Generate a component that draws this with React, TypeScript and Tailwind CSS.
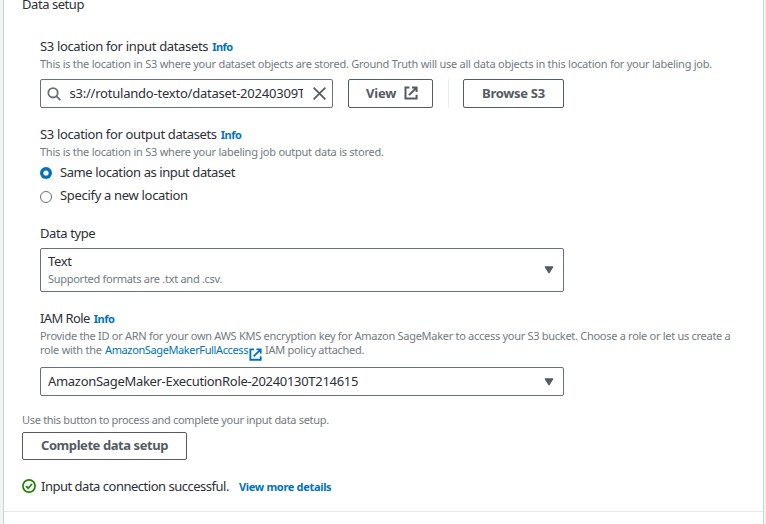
import React from "react";

function ExternalIcon({ className }: { className: string }) {
  return (
    <svg viewBox="0 0 14 14" className={className} fill="none" stroke="currentColor" strokeWidth="2">
      <path d="M5.4 1.5H1.5V12.6H12.6V8.8" />
      <path d="M8 1.5H12.6V6M12.4 1.7L5 9.1" />
    </svg>
  );
}

function Label({ text, info, className }: { text: string; info?: boolean; className: string }) {
  return (
    <div className="flex h-5 items-center whitespace-nowrap pb-0.5 text-[13px] leading-5">
      <span className={className}>{text}</span>
      {info && <a className="ml-1 pt-px text-[11px] font-bold leading-5 tracking-[-0.5px] text-[#0073bb]">Info</a>}
    </div>
  );
}

function Caret() {
  return (
    <svg viewBox="0 0 10 8" className="h-2 w-2.5 shrink-0" fill="#545b64" stroke="#545b64" strokeLinejoin="round">
      <path d="M1 .8H9L5 7.2Z" />
    </svg>
  );
}

export default function App() {
  return (
    <div className="h-[524px] w-[766px] overflow-hidden bg-[#f2f3f3] pl-[3px] font-['Noto_Sans','Open_Sans',sans-serif] text-[#2d3036]">
      <main className="h-[524px] w-[761px] overflow-hidden border-x border-[#d0d4d4] bg-white">
        <div className="flow-root h-[511px] pl-[18px]">
          <div className="-mt-[5px]">
            <Label text="Data setup" className="tracking-[-0.45px]" />
          </div>
          <div className="mt-[22px] pl-[18px]">
            <Label text="S3 location for input datasets" info className="tracking-[-0.34px]" />
            <p className="h-[15px] whitespace-nowrap text-[11px] leading-[14px] text-[#737a81]">
              <span className="tracking-[-0.25px]">This is the location in S3 where your dataset objects are stored. Ground Truth will use all data objects in this location for your labeling job.</span>
            </p>
            <div className="mt-[7px] flex h-[29px]">
              <div className="flex w-[293px] items-center rounded-[2px] border border-[#687078] pl-1.5">
                <svg viewBox="0 0 14 14" className="size-3.5 shrink-0" fill="none" stroke="#687078" strokeWidth="1.8">
                  <circle cx="6" cy="5.8" r="4.7" />
                  <path d="M9.4 9.2L13.4 13.2" />
                </svg>
                <div className="ml-[8.5px] w-[233.5px] overflow-hidden whitespace-nowrap pb-0.5 text-[13px] leading-5">
                  <span className="tracking-[-0.22px]">s3://rotulando-texto/dataset-20240309T</span>
                </div>
                <svg viewBox="0 0 12 12" className="ml-[10px] size-[13px] shrink-0" fill="none" stroke="#545b64" strokeWidth="1.6">
                  <path d="M.6 .6L11.4 11.4M11.4 .6L.6 11.4" />
                </svg>
              </div>
              <button className="ml-[15px] flex w-[85px] items-center rounded-[2px] border border-[#545b64] pl-[17px] text-[13px] font-bold leading-5 text-[#545b64]">
                <span className="w-[30px] whitespace-nowrap pb-0.5 text-left tracking-[-0.2px]">View</span>
                <ExternalIcon className="mb-px ml-2 size-3.5" />
              </button>
              <div className="ml-[15px] w-px bg-[#eaeded]" />
              <button className="ml-3.5 w-[101px] rounded-[2px] border border-[#545b64] pb-0.5 text-[13px] font-bold leading-5 text-[#545b64]">
                <span className="tracking-[-0.3px]">Browse S3</span>
              </button>
            </div>
            <div className="mt-[17px]">
              <Label text="S3 location for output datasets" info className="tracking-[-0.35px]" />
            </div>
            <p className="h-[15px] whitespace-nowrap text-[11px] leading-[14px] text-[#737a81]">
              <span className="tracking-[-0.25px]">This is the location in S3 where your labeling job output data is stored.</span>
            </p>
            <div className="mt-[3px] flex h-5 items-center text-[13px] leading-5">
              <svg viewBox="0 0 12 12" className="size-3">
                <circle cx="6" cy="6" r="6" fill="#0073bb" />
                <circle cx="6" cy="6" r="2.6" fill="#fff" />
              </svg>
              <span className="ml-2 pb-0.5 tracking-[-0.41px]">Same location as input dataset</span>
            </div>
            <div className="mt-[3px] flex h-5 items-center text-[13px] leading-5">
              <span className="mt-0.5 size-3 rounded-full border border-[#687078] bg-white" />
              <span className="ml-2 pb-0.5 tracking-[-0.31px]">Specify a new location</span>
            </div>
            <div className="mt-[18px]">
              <Label text="Data type" className="tracking-[-0.4px]" />
            </div>
            <div className="mt-1 flex h-11 w-[524px] items-center justify-between rounded-[2px] border border-[#687078] pl-[7px] pr-[9px]">
              <div>
                <div className="h-[18px] text-[13px] leading-4 tracking-[-0.3px]">Text</div>
                <div className="text-[11px] leading-4 text-[#737a81]">
                  <span className="tracking-[-0.28px]">Supported formats are .txt and .csv.</span>
                </div>
              </div>
              <Caret />
            </div>
            <div className="mt-[17px]">
              <Label text="IAM Role" info className="tracking-[-0.6px]" />
            </div>
            <div className="whitespace-nowrap text-[11px] leading-[14px] text-[#737a81]">
              <p className="h-3.5">
                <span className="tracking-[-0.285px]">Provide the ID or ARN for your own AWS KMS encryption key for Amazon SageMaker to access your S3 bucket. Choose a role or let us create a</span>
              </p>
              <p className="flex h-3.5">
                <span className="w-[65px] tracking-[-0.25px]">role with the</span>
                <a className="w-[144px] tracking-[-0.38px] text-[#0073bb]">AmazonSageMakerFullAccess</a>
                <ExternalIcon className="mt-[5px] size-[13px] text-[#0073bb]" />
                <span className="ml-[3px] tracking-[-0.28px]">IAM policy attached.</span>
              </p>
            </div>
            <div className="mt-2.5 flex h-[29px] w-[524px] items-center justify-between rounded-[2px] border border-[#687078] pl-[7px] pr-[9px] text-[13px] leading-5">
              <span className="pb-0.5 tracking-[-0.31px]">AmazonSageMaker-ExecutionRole-20240130T214615</span>
              <Caret />
            </div>
          </div>
          <p className="mt-[17px] h-3.5 whitespace-nowrap text-[11px] leading-[14px] text-[#737a81]">
            <span className="tracking-[-0.31px]">Use this button to process and complete your input data setup.</span>
          </p>
          <button className="mt-[5px] block h-7 w-[165px] rounded-[2px] border border-[#545b64] pb-0.5 text-[13px] font-bold leading-5 text-[#545b64]">
            <span className="tracking-[-0.43px]">Complete data setup</span>
          </button>
          <div className="mt-[17px] flex h-5 items-center whitespace-nowrap text-[13px] leading-5">
            <svg viewBox="0 0 14 14" className="mb-0.5 size-3.5" fill="none" stroke="#1d8102" strokeWidth="1.7">
              <circle cx="7" cy="7" r="6.1" />
              <path d="M4 7.2L6.2 9.2L10 5" />
            </svg>
            <span className="ml-[5px] w-[198px] pb-0.5 tracking-[-0.49px]">Input data connection successful.</span>
            <a className="text-[11px] font-bold tracking-[-0.32px] text-[#0073bb]">View more details</a>
          </div>
        </div>
        <div className="h-px bg-[#e6e9e9]" />
      </main>
    </div>
  );
}
